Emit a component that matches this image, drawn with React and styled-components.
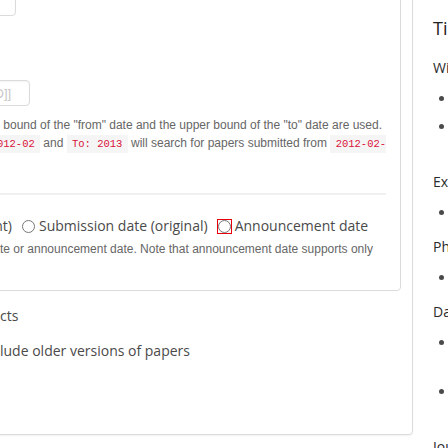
import React from 'react';
import styled, { createGlobalStyle } from 'styled-components';

const GlobalStyle = createGlobalStyle`
  *, *::before, *::after { box-sizing: border-box; }
  html, body { margin: 0; padding: 0; overflow: hidden; background: #fff; }
  body {
    font-family: "Open Sans", "Noto Sans", sans-serif;
    color: #4a4a4a;
  }
`;

const Page = styled.div`
  display: flex;
  align-items: flex-start;
  width: 1300px;
  margin: -40px 0 0 -40px;
`;

const FormColumn = styled.div`
  flex: none;
  width: 453px;
`;

const OuterBox = styled.div`
  border: 1px solid #dbdbdb;
  border-radius: 4px;
  padding: 11px 11px 73px;
  box-shadow: 0 1px 2px rgba(10, 10, 10, 0.06);
`;

const InnerBox = styled.div`
  border: 1px solid #dbdbdb;
  border-radius: 4px;
  padding: 17px 14px 32px 27px;
`;

/* zero-width slot: whatever it holds ends at $end px and spills to the left */
const Lead = styled.span`
  display: inline-flex;
  flex: none;
  justify-content: flex-end;
  align-items: center;
  gap: 4px;
  width: ${p => p.$end}px;
  white-space: nowrap;
`;

const InputRow = styled.div`
  display: flex;
  height: 26px;
  margin-top: ${p => p.$top || 0}px;
`;

const DateInput = styled.input`
  width: ${p => p.$w}px;
  height: 26px;
  padding: 0 8px;
  border: 1px solid #dbdbdb;
  border-radius: 4px;
  box-shadow: inset 0 1px 2px rgba(10, 10, 10, 0.05);
  font-family: Arial, "Liberation Sans", sans-serif;
  font-size: 13px;
  color: #363636;
  background: #fff;

  &::placeholder {
    color: #c6c6c6;
  }
`;

const Help = styled.div`
  margin-top: ${p => p.$top || 0}px;
  font-family: Arial, "Liberation Sans", sans-serif;
  font-size: 12px;
  line-height: 18px;
  color: #666;
`;

const HelpLine = styled.div`
  white-space: nowrap;
  overflow: hidden;
`;

const Code = styled.code`
  font-family: "Courier New", "Liberation Mono", monospace;
  font-size: 0.875em;
  color: #da1039;
  background: #f5f5f5;
  padding: 0.25em 0.5em;
`;

const Divider = styled.hr`
  height: 2px;
  margin: 40px 0 0;
  border: none;
  background: #f0f0f0;
`;

const RadioRow = styled.div`
  display: flex;
  align-items: center;
  gap: 10px;
  height: 20px;
  margin-top: 21px;
  font-size: 14px;
  line-height: 20px;
  white-space: nowrap;
`;

const Option = styled.label`
  display: inline-flex;
  align-items: center;
  gap: 4px;
`;

const Radio = styled.input.attrs({ type: 'radio' })`
  width: 13px;
  height: 13px;
  margin: 0;
  outline: ${p => (p.$focused ? '1px solid #e8000b' : 'none')};
  outline-offset: 0;
`;

const Checkbox = styled.input.attrs({ type: 'checkbox' })`
  width: 13px;
  height: 13px;
  margin: 0;
`;

const OptionsBlock = styled.div`
  padding-left: 28px;
  margin-top: 15px;
`;

const OptionLine = styled.div`
  display: flex;
  align-items: center;
  height: 20px;
  margin-top: ${p => p.$top || 0}px;
  font-size: 14px;
  line-height: 20px;
  white-space: nowrap;
`;

const TipsColumn = styled.aside`
  flex: none;
  width: 720px;
  margin-left: 20px;
  padding-top: 56px;
  color: #222;
`;

const TipsTitle = styled.h2`
  margin: 0 0 17px;
  font-size: 18px;
  font-weight: 400;
  line-height: 24px;
`;

const TipsHeading = styled.h4`
  margin: 0;
  font-size: 14px;
  font-weight: 400;
  line-height: 21px;
  color: #2b2b2b;
`;

const TipsList = styled.ul`
  margin: 10px 0 13px;
  padding-left: 23px;
  width: 680px;
  font-size: 14px;
  line-height: 21px;
  color: #4a4a4a;

  li + li {
    margin-top: 7px;
  }
`;

const tips = [
  {
    title: 'Wildcards:',
    items: [
      'Use ? to replace a single character or * to replace any number of characters.',
      'Can be used in any field, but not in the first character position. See Journal References tips for exceptions.',
    ],
  },
  {
    title: 'Expressions:',
    items: ['TeX expressions can be searched, enclosed in single $ characters.'],
  },
  {
    title: 'Phrases:',
    items: ['Enclose phrases in double quotes for exact matches in title, abstract, and comments.'],
  },
  {
    title: 'Dates:',
    items: [
      'Sorting by announcement date will use the year and month the original version (v1) of the paper was announced.',
      'Sorting by submission date will use the year, month and day the latest version of the paper was submitted.',
    ],
  },
  {
    title: 'Journal References:',
    items: ['If a journal reference search contains a wildcard, matches will be made using wildcard matching as expected.'],
  },
];

export default function App() {
  return (
    <>
      <GlobalStyle />
      <Page>
        <FormColumn>
          <OuterBox>
            <InnerBox>
              <InputRow>
                <Lead $end={16}>
                  <DateInput $w={110} aria-label="Year" />
                </Lead>
              </InputRow>

              <InputRow $top={64}>
                <Lead $end={30}>
                  <DateInput $w={126} placeholder="YYYY[-MM[-DD]]" aria-label="To" />
                </Lead>
              </InputRow>

              <Help $top={10}>
                <HelpLine>
                  <Lead $end={0}>When limiting by date range, the lower</Lead>
                  {' '}bound of the "from" date and the upper bound of the "to" date are used.
                </HelpLine>
                <HelpLine>
                  <Lead $end={40}>
                    <span>
                      For example, searching with From: <Code>2012-02</Code>
                    </span>
                  </Lead>
                  {' '}and <Code>To: 2013</Code> will search for papers submitted from{' '}
                  <Code>2012-02-01</Code> to <Code>2013-12-31</Code>.
                </HelpLine>
              </Help>

              <Divider />

              <RadioRow>
                <Lead $end={12}>
                  <Radio name="date_type" />
                  Submission date (most recent)
                </Lead>
                <Option>
                  <Radio name="date_type" />
                  Submission date (original)
                </Option>
                <Option>
                  <Radio name="date_type" $focused />
                  Announcement date
                </Option>
              </RadioRow>

              <Help $top={4}>
                <HelpLine>
                  <Lead $end={0}>You may filter on either submission da</Lead>
                  te or announcement date. Note that announcement date supports only
                </HelpLine>
              </Help>
            </InnerBox>

            <OptionsBlock>
              <OptionLine>
                <Lead $end={0}>
                  <Radio name="abstracts" />
                  Hide abstra
                </Lead>
                cts
              </OptionLine>
              <OptionLine $top={15}>
                <Lead $end={0}>
                  <Checkbox />
                  Inc
                </Lead>
                lude older versions of papers
              </OptionLine>
            </OptionsBlock>
          </OuterBox>
        </FormColumn>

        <TipsColumn>
          <TipsTitle>Tips</TipsTitle>
          {tips.map(group => (
            <React.Fragment key={group.title}>
              <TipsHeading>{group.title}</TipsHeading>
              <TipsList>
                {group.items.map(item => (
                  <li key={item}>{item}</li>
                ))}
              </TipsList>
            </React.Fragment>
          ))}
        </TipsColumn>
      </Page>
    </>
  );
}
